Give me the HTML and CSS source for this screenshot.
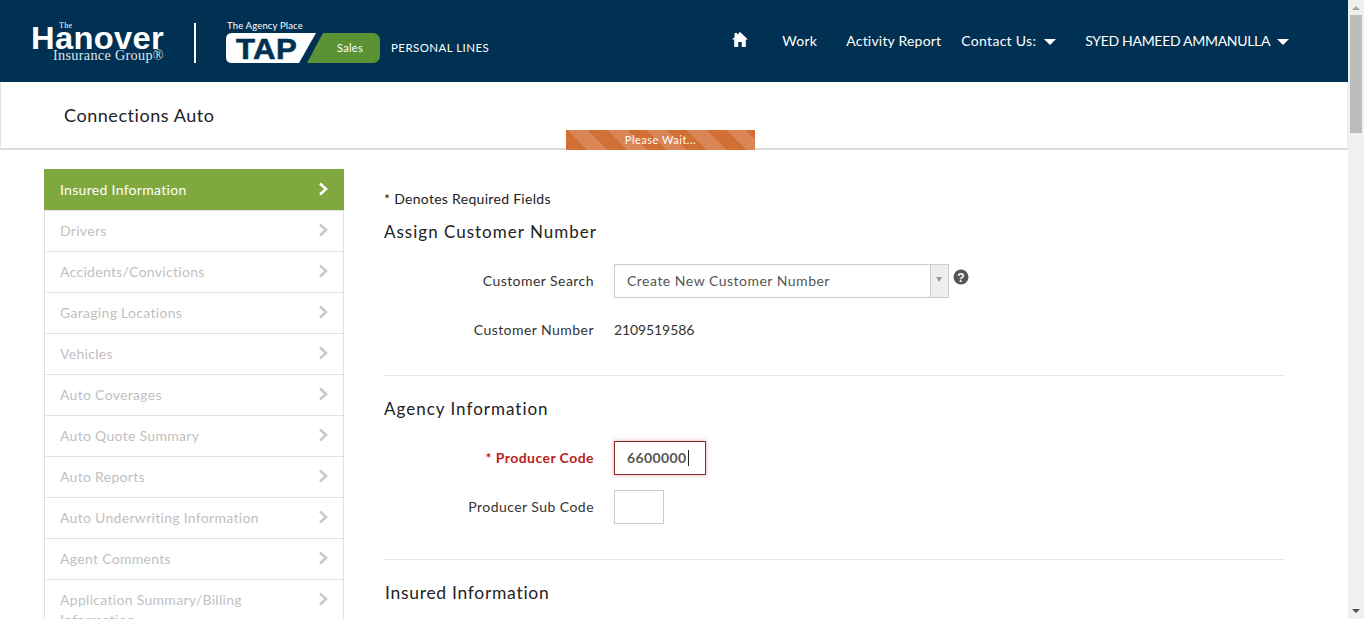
FILE: index.html
```html
<!DOCTYPE html>
<html lang="en">
<head>
  <meta charset="UTF-8">
  <title>Connections Auto</title>
  <link rel="stylesheet" href="styles.css">
</head>
<body>
  <div class="page">
    <div class="main">
      <header class="topbar">
        <svg class="logo" width="500" height="82" viewBox="0 0 500 82">
          <text x="59" y="28" class="logo-the">The</text>
          <text x="31" y="49" class="logo-hanover" textLength="133" lengthAdjust="spacingAndGlyphs">Hanover</text>
          <text x="53" y="60" class="logo-group" textLength="111" lengthAdjust="spacingAndGlyphs">Insurance Group®</text>
          <rect x="194" y="23" width="2" height="40" fill="#fff"/>
          <text x="227" y="29" class="logo-agency" textLength="76">The Agency Place</text>
          <path d="M232 33H316L299 63H232Q226 63 226 57V39Q226 33 232 33Z" fill="#fff"/>
          <path d="M323 33H372Q380 33 380 41V55Q380 63 372 63H307Z" fill="#5b9234"/>
          <text x="236" y="59" class="logo-tap" textLength="61" lengthAdjust="spacingAndGlyphs">TAP</text>
          <text x="337" y="52" class="logo-sales">Sales</text>
          <text x="391" y="52" class="logo-lines" textLength="98">PERSONAL LINES</text>
        </svg>
        <nav class="nav">
          <a class="nav-home">
            <svg width="16" height="15" viewBox="0 0 16 15"><path d="M8 0L16 7.5H13.8V15H9.8V10H6.2V15H2.2V7.5H0L2.6 5V1H5V2.8Z" fill="#fff"/></svg>
          </a>
          <a class="nav-work">Work</a>
          <a class="nav-activity">Activity Report</a>
          <a class="nav-contact">Contact Us: <span class="caret"></span></a>
          <a class="nav-user">SYED HAMEED AMMANULLA <span class="caret"></span></a>
        </nav>
      </header>

      <div class="subheader">
        <h1>Connections Auto</h1>
        <div class="wait">Please Wait...</div>
      </div>

      <div class="body">
        <ul class="side">
          <li class="active">Insured Information<svg class="chev" width="11" height="14" viewBox="0 0 11 14"><path d="M2 1.5L8 7L2 12.5"/></svg></li>
          <li>Drivers<svg class="chev" width="11" height="14" viewBox="0 0 11 14"><path d="M2 1.5L8 7L2 12.5"/></svg></li>
          <li>Accidents/Convictions<svg class="chev" width="11" height="14" viewBox="0 0 11 14"><path d="M2 1.5L8 7L2 12.5"/></svg></li>
          <li>Garaging Locations<svg class="chev" width="11" height="14" viewBox="0 0 11 14"><path d="M2 1.5L8 7L2 12.5"/></svg></li>
          <li>Vehicles<svg class="chev" width="11" height="14" viewBox="0 0 11 14"><path d="M2 1.5L8 7L2 12.5"/></svg></li>
          <li>Auto Coverages<svg class="chev" width="11" height="14" viewBox="0 0 11 14"><path d="M2 1.5L8 7L2 12.5"/></svg></li>
          <li>Auto Quote Summary<svg class="chev" width="11" height="14" viewBox="0 0 11 14"><path d="M2 1.5L8 7L2 12.5"/></svg></li>
          <li>Auto Reports<svg class="chev" width="11" height="14" viewBox="0 0 11 14"><path d="M2 1.5L8 7L2 12.5"/></svg></li>
          <li>Auto Underwriting Information<svg class="chev" width="11" height="14" viewBox="0 0 11 14"><path d="M2 1.5L8 7L2 12.5"/></svg></li>
          <li>Agent Comments<svg class="chev" width="11" height="14" viewBox="0 0 11 14"><path d="M2 1.5L8 7L2 12.5"/></svg></li>
          <li class="tall"><span>Application Summary/Billing Information</span><svg class="chev" width="11" height="14" viewBox="0 0 11 14"><path d="M2 1.5L8 7L2 12.5"/></svg></li>
        </ul>

        <div class="content">
          <p class="note">* Denotes Required Fields</p>

          <section class="block">
            <h2>Assign Customer Number</h2>
            <div class="row row-search">
              <label>Customer Search</label>
              <div class="combo">
                <span class="combo-text">Create New Customer Number</span>
                <span class="combo-btn"></span>
              </div>
              <svg class="help" width="16" height="16" viewBox="0 0 16 16">
                <circle cx="8" cy="8" r="7.5" fill="#555"/>
                <text x="8" y="12.5" class="help-mark">?</text>
              </svg>
            </div>
            <div class="row row-number">
              <label>Customer Number</label>
              <span class="value">2109519586</span>
            </div>
          </section>

          <section class="block">
            <h2>Agency Information</h2>
            <div class="row row-code">
              <label class="required">* Producer Code</label>
              <div class="input input-code">6600000<span class="cursor"></span></div>
            </div>
            <div class="row row-sub">
              <label>Producer Sub Code</label>
              <div class="input input-sub"></div>
            </div>
          </section>

          <section class="block block-last">
            <h2>Insured Information</h2>
          </section>
        </div>
      </div>
    </div>

    <div class="scrollbar">
      <span class="arrow arrow-up"></span>
      <span class="thumb"></span>
      <span class="arrow arrow-down"></span>
    </div>
  </div>
</body>
</html>
```

FILE: styles.css
```css
* {
  box-sizing: border-box;
}
html, body {
  margin: 0;
  height: 100%;
  overflow: hidden;
}
body {
  font-family: 'Lato', sans-serif;
  font-size: 14px;
  letter-spacing: 0.3px;
  color: #333;
  background: #fff;
}
.page {
  display: flex;
  height: 619px;
}
.main {
  flex: 1;
  min-width: 0;
  overflow: hidden;
}

/* top bar */
.topbar {
  height: 82px;
  background: #003152;
  display: flex;
  justify-content: space-between;
}
.logo-the {
  font: 8px 'Liberation Serif', serif;
  fill: #fff;
}
.logo-hanover {
  font: bold 31px 'Liberation Sans', sans-serif;
  fill: #fff;
}
.logo-group {
  font: 14px 'Liberation Serif', serif;
  fill: #dfe6ec;
}
.logo-agency {
  font: 9.5px 'Lato', sans-serif;
  fill: #fff;
}
.logo-tap {
  font: bold 30px 'Liberation Sans', sans-serif;
  fill: #003152;
  stroke: #003152;
  stroke-width: 0.6;
}
.logo-sales {
  font: 11px 'Lato', sans-serif;
  fill: #fff;
}
.logo-lines {
  font: 11.5px 'Lato', sans-serif;
  fill: #fff;
}
.nav {
  display: flex;
  align-items: center;
  height: 82px;
  padding: 0 59px 2px 0;
  color: #fff;
}
.nav a {
  white-space: nowrap;
}
.nav-home {
  display: flex;
  margin-top: -2px;
}
.nav-work {
  margin-left: 34px;
}
.nav-activity {
  margin-left: 29px;
  letter-spacing: 0.2px;
}
.nav-contact {
  margin-left: 20px;
}
.nav-user {
  margin-left: 29px;
  letter-spacing: -0.3px;
}
.caret {
  display: inline-block;
  margin-left: 4px;
  vertical-align: 1px;
  border-top: 6px solid #fff;
  border-left: 6.5px solid transparent;
  border-right: 6.5px solid transparent;
}

/* title strip */
.subheader {
  position: relative;
  height: 68px;
  border-left: 1px solid #e4e4e4;
  border-right: 1px solid #eee;
  border-bottom: 2px solid #ddd;
  padding-left: 63px;
}
.subheader h1 {
  margin: 0;
  padding-top: 21px;
  font-size: 18px;
  line-height: 24px;
  font-weight: 400;
  letter-spacing: 0.55px;
  color: #222;
}
.wait {
  position: absolute;
  left: 565px;
  top: 48px;
  width: 189px;
  height: 20px;
  font-size: 11px;
  line-height: 20px;
  letter-spacing: 0.5px;
  text-align: center;
  color: #fff;
  background: repeating-linear-gradient(45deg, #d16f35 1.4px, #d16f35 15.4px, #d98556 15.4px, #d98556 29.4px);
}

/* side menu */
.body {
  display: flex;
  padding: 19px 64px 0 44px;
}
.side {
  width: 300px;
  flex: none;
  margin: 0;
  padding: 0;
  list-style: none;
  border: 1px solid #e2e2e2;
  border-top: 0;
}
.side li {
  display: flex;
  justify-content: space-between;
  align-items: flex-start;
  height: 41px;
  padding: 11px 15px 0;
  line-height: 17px;
  color: #bfbfbf;
  border-bottom: 1px solid #e2e2e2;
}
.side li.active {
  height: 42px;
  margin: 0 -1px;
  padding: 12px 16px 0;
  color: #fff;
  background: #7fa93f;
  background-clip: padding-box;
}
.side li.tall {
  height: 70px;
  padding-top: 12px;
}
.side li.tall span {
  width: 215px;
  line-height: 20px;
  margin-top: -2px;
}
.side li.tall .chev {
  margin-top: 0;
}
.chev {
  flex: none;
  fill: none;
  stroke: #c9c9c9;
  stroke-width: 2.6;
  margin-top: 1px;
  margin-right: -1px;
}
.active .chev {
  stroke: #fff;
}

/* form */
.content {
  flex: 1;
  margin-left: 40px;
  padding-top: 21px;
}
.note {
  margin: 0;
  line-height: 18px;
  color: #222;
}
.block {
  border-bottom: 1px solid #e8e8e8;
}
.block-last {
  border-bottom: 0;
}
.block h2 {
  margin: 0;
  font-size: 17px;
  line-height: 24px;
  font-weight: 400;
  letter-spacing: 1px;
  color: #222;
}
.row {
  display: flex;
  align-items: center;
}
.row label {
  width: 210px;
  margin-right: 20px;
  text-align: right;
  letter-spacing: 0.45px;
  color: #333;
}
.row-search label,
.row-code label,
.row-sub label {
  margin-bottom: 2px;
}
.block:nth-of-type(1) h2 {
  margin-top: 12px;
}
.row-search {
  margin-top: 20px;
}
.row-number {
  margin-top: 23px;
  padding-bottom: 36px;
  line-height: 18px;
}
.block:nth-of-type(2) h2 {
  margin-top: 21px;
}
.row-code {
  margin-top: 20px;
}
.row-sub {
  margin-top: 15px;
  padding-bottom: 35px;
}
.block:nth-of-type(3) h2 {
  margin: 21px 0 0 1px;
  font-size: 17.5px;
  letter-spacing: 0.7px;
}
.value {
  letter-spacing: -0.1px;
  color: #333;
}
.combo {
  display: flex;
  width: 335px;
  height: 34px;
  border: 1px solid #ccc;
  color: #555;
}
.combo-text {
  flex: 1;
  padding-left: 12px;
  line-height: 32px;
  letter-spacing: 0.5px;
}
.combo-btn {
  position: relative;
  width: 18px;
  background: #eee;
  border-left: 1px solid #ccc;
}
.combo-btn::after {
  content: "";
  position: absolute;
  left: 5px;
  top: 12px;
  border-top: 5px solid #999;
  border-left: 3px solid transparent;
  border-right: 3px solid transparent;
}
.help {
  margin: -8px 0 0 4px;
}
.help-mark {
  font: bold 12px 'Liberation Sans', sans-serif;
  fill: #fff;
  text-anchor: middle;
}
.row .required {
  font-weight: 700;
  color: #b9211c;
}
.input {
  height: 34px;
  border: 1px solid #ccc;
  color: #555;
  line-height: 32px;
}
.input-code {
  width: 92px;
  padding-left: 12px;
  font-weight: 700;
  letter-spacing: 0.4px;
  border-color: #8a2c2c;
  box-shadow: 0 0 4px rgba(185, 33, 28, 0.4);
}
.input-sub {
  width: 50px;
}
.cursor {
  display: inline-block;
  width: 1px;
  height: 16px;
  margin-left: 1px;
  vertical-align: -3px;
  background: #222;
}

/* page scrollbar */
.scrollbar {
  flex: none;
  width: 16px;
  background: #f0f0f0;
  display: flex;
  flex-direction: column;
  align-items: center;
}
.thumb {
  width: 12px;
  height: 118px;
  margin-top: 5px;
  background: #bcbcbc;
}
.arrow {
  width: 0;
  border-left: 4px solid transparent;
  border-right: 4px solid transparent;
}
.arrow-up {
  margin-top: 6px;
  border-bottom: 4px solid #a3a3a3;
}
.arrow-down {
  margin-top: auto;
  margin-bottom: 6px;
  border-top: 4px solid #505050;
}
```
